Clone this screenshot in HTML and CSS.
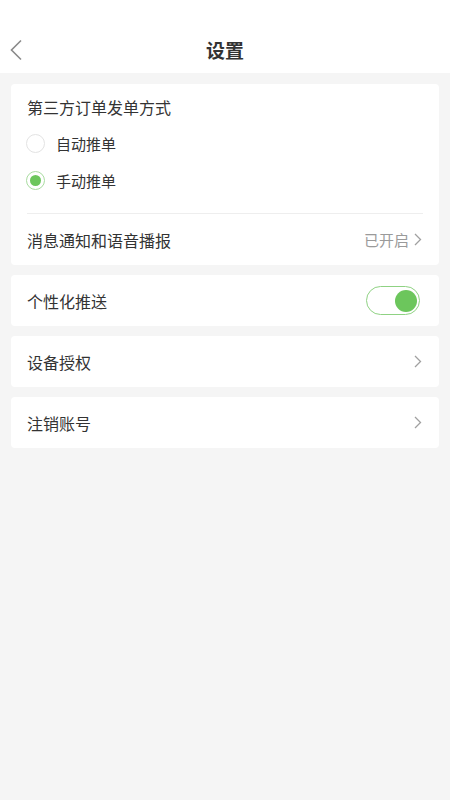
FILE: index.html
```html
<!DOCTYPE html>
<html lang="zh-CN">
<head>
<meta charset="utf-8">
<title>设置</title>
<link rel="stylesheet" href="styles.css">
</head>
<body>
<header class="header">
  <div class="nav">
    <svg class="back" width="14" height="22" viewBox="0 0 14 22"><path d="M12 1.5 L2.5 11 L12 20.5" fill="none" stroke="#8a8a8a" stroke-width="1.6"/></svg>
    <h1 class="title">设置</h1>
  </div>
</header>
<main class="main">
  <section class="card card-order">
    <div class="card-title">第三方订单发单方式</div>
    <div class="radio-row">
      <span class="radio"></span><span class="radio-label">自动推单</span>
    </div>
    <div class="radio-row">
      <span class="radio checked"></span><span class="radio-label">手动推单</span>
    </div>
    <div class="divider"></div>
    <div class="row">
      <span class="label">消息通知和语音播报</span>
      <span class="value">已开启<svg class="chev" width="8" height="13" viewBox="0 0 8 13"><path d="M1 1 L6.5 6.5 L1 12" fill="none" stroke="#a0a0a0" stroke-width="1.3"/></svg></span>
    </div>
  </section>
  <section class="card">
    <div class="row">
      <span class="label">个性化推送</span>
      <span class="toggle"><span class="knob"></span></span>
    </div>
  </section>
  <section class="card">
    <div class="row">
      <span class="label">设备授权</span>
      <svg class="chev" width="8" height="13" viewBox="0 0 8 13"><path d="M1 1 L6.5 6.5 L1 12" fill="none" stroke="#a0a0a0" stroke-width="1.3"/></svg>
    </div>
  </section>
  <section class="card">
    <div class="row">
      <span class="label">注销账号</span>
      <svg class="chev" width="8" height="13" viewBox="0 0 8 13"><path d="M1 1 L6.5 6.5 L1 12" fill="none" stroke="#a0a0a0" stroke-width="1.3"/></svg>
    </div>
  </section>
</main>
</body>
</html>
```
FILE: styles.css
```css
* { box-sizing: border-box; }
html, body {
  margin: 0;
  padding: 0;
}
body {
  background: #f5f5f5;
  font-family: "Noto Sans CJK SC", "Noto Sans", sans-serif;
  color: #333;
  min-height: 800px;
}
.header {
  background: #fff;
  padding-top: 28px;
}
.nav {
  height: 45px;
  position: relative;
  display: flex;
  align-items: center;
  justify-content: center;
}
.back {
  position: absolute;
  left: 9px;
  top: 11px;
}
.title {
  margin: 0;
  font-size: 19px;
  font-weight: 700;
  color: #333;
  line-height: 45px;
  transform: translateY(-1px);
}
.main {
  padding: 11px 11px;
  display: flex;
  flex-direction: column;
  gap: 10px;
}
.card {
  background: #fff;
  border-radius: 4px;
  padding: 0 16px;
}
.card-title {
  font-size: 16px;
  line-height: 22px;
  padding-top: 12px;
  padding-bottom: 7px;
}
.radio-row {
  height: 37px;
  display: flex;
  align-items: center;
}
.radio {
  width: 19px;
  height: 19px;
  border-radius: 50%;
  border: 1px solid #e3e3e3;
  margin-left: -1px;
  display: flex;
  align-items: center;
  justify-content: center;
}
.radio.checked {
  border-color: #a9dca0;
}
.radio.checked::after {
  content: "";
  width: 11px;
  height: 11px;
  border-radius: 50%;
  background: #6cc65c;
}
.radio-label {
  margin-left: 11px;
  font-size: 15px;
}
.divider {
  height: 1px;
  background: #eeeeee;
  margin-top: 14px;
}
.row {
  height: 51px;
  display: flex;
  align-items: center;
  justify-content: space-between;
}
.label {
  font-size: 16px;
}
.value {
  font-size: 15px;
  color: #9a9a9a;
  display: flex;
  align-items: center;
  gap: 5px;
}
.chev {
  display: block;
  margin-right: 1px;
}
.toggle {
  width: 54px;
  height: 29px;
  border: 1px solid #8fd283;
  border-radius: 15px;
  margin-right: 3px;
  position: relative;
  background: #fff;
}
.knob {
  position: absolute;
  right: 2px;
  top: 2.5px;
  width: 22px;
  height: 22px;
  border-radius: 50%;
  background: #6cc65c;
}
```
